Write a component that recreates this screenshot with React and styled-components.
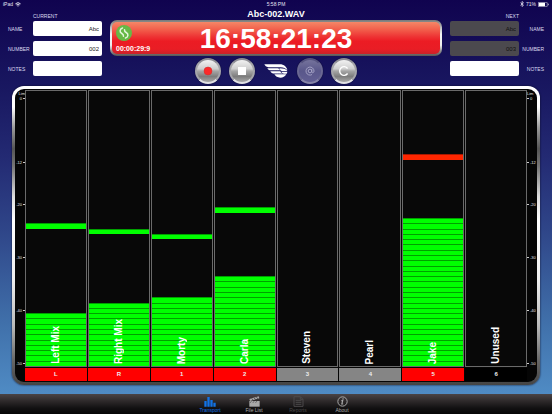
import React from "react";
import styled, { createGlobalStyle, css } from "styled-components";

const sans = '"Liberation Sans", Arial, Helvetica, sans-serif';

const GlobalStyle = createGlobalStyle`
  *, *::before, *::after { box-sizing: border-box; }
  body { margin: 0; background: #4f8bc4; }
  button, input { font-family: inherit; }
`;

const Page = styled.div`
  min-height: 100vh;
  display: flex;
  flex-direction: column;
  font-family: ${sans};
  color: #fff;
  background: linear-gradient(#10034f 0%, #191861 22%, #232a73 38%, #2f4689 56%, #4070aa 78%, #4f8bc4 95%);
`;

const StatusBar = styled.header`
  height: 8px;
  padding: 0 3px;
  display: grid;
  grid-template-columns: 1fr auto 1fr;
  align-items: center;
  font-size: 5px;
  line-height: 8px;
  color: #e4e2f0;
`;

const StatusGroup = styled.div`
  display: flex;
  align-items: center;
  gap: 2px;
  justify-content: ${(p) => (p.$end ? "flex-end" : "flex-start")};
  svg { display: block; }
`;

const Deck = styled.section`
  display: grid;
  grid-template-columns: 94px 1fr 94px;
  gap: 8px;
  padding: 0 8px;
  height: 78px;
`;

const TakeForm = styled.form`
  display: flex;
  flex-direction: column;
  gap: 5px;
`;

const TakeHeading = styled.h2`
  margin: 0 ${(p) => (p.$mirrored ? "25px" : "0")} -5px ${(p) => (p.$mirrored ? "0" : "25px")};
  height: 13px;
  padding-top: 5px;
  font-size: 5px;
  line-height: 6px;
  font-weight: 400;
  color: #dcdaf0;
  text-align: ${(p) => (p.$mirrored ? "right" : "left")};
`;

const FieldRow = styled.div`
  display: flex;
  flex-direction: ${(p) => (p.$mirrored ? "row-reverse" : "row")};
  align-items: center;
  height: 15px;
`;

const FieldLabel = styled.label`
  flex: 0 0 25px;
  font-size: 5px;
  line-height: 6px;
  color: #dcdaf0;
  text-align: ${(p) => (p.$mirrored ? "right" : "left")};
`;

const FieldInput = styled.input`
  flex: 1;
  min-width: 0;
  height: 15px;
  padding: 0 3px;
  border: 0;
  border-radius: 2px;
  background: #fff;
  color: #222;
  font-size: 6px;
  text-align: right;
  &:disabled { background: #4b494e; color: #111; opacity: 1; }
`;

const Center = styled.div`
  display: flex;
  flex-direction: column;
  align-items: stretch;
`;

const FileName = styled.h1`
  margin: 0;
  height: 12px;
  font-size: 9px;
  line-height: 12px;
  font-weight: 700;
  text-align: center;
`;

const DisplayFrame = styled.div`
  height: 36px;
  padding: 2px;
  border-radius: 7px;
  background: linear-gradient(#777 0%, #aaa 15%, #f4f4f4 40%, #eee 70%, #888 88%, #555 100%);
`;

const Display = styled.div`
  height: 100%;
  padding: 2px 4px 0;
  border-radius: 5px;
  display: grid;
  grid-template-columns: 1fr auto 1fr;
  align-items: center;
  background: linear-gradient(#f58767 0%, #f2624d 22%, #ee3535 45%, #ec1c24 60%, #e91d25 85%, #c9222a 100%);
`;

const Elapsed = styled.div`
  display: flex;
  flex-direction: column;
  align-items: flex-start;
  gap: 4px;
  font-size: 7px;
  line-height: 8px;
  font-weight: 700;
`;

const Timecode = styled.output`
  font-size: 28px;
  line-height: 30px;
  font-weight: 700;
`;

const Transport = styled.div`
  display: flex;
  justify-content: center;
  align-items: center;
  gap: 8px;
  padding-top: 2px;
`;

const RoundButton = styled.button`
  width: 26px;
  height: 26px;
  padding: 0;
  border: 2px solid #c9c9cd;
  border-color: #8d8d94 #a5a5aa #e2e2e4;
  border-radius: 50%;
  display: grid;
  place-items: center;
  background: linear-gradient(#f2f2f2 0%, #cfcfcf 40%, #a6a6a6 50%, #7d7d7d 75%, #a8a8a8 100%);
  box-shadow: 0 0 1px #000;
  &:disabled {
    border-color: #55537f #6a6892 #8785a8;
    background: linear-gradient(#75739c, #59578a 50%, #625f94);
  }
`;

const Emblem = styled.div`
  width: 26px;
  display: grid;
  place-items: center;
`;

const Bezel = styled.main`
  flex: 1;
  display: flex;
  margin: 0 12px 9px;
  padding: 3px;
  border-radius: 12px;
  background: linear-gradient(#fff 0%, #fff 7%, #999 14%, #555 21%, #777 27%, #ddd 37%, #fff 45%, #eee 65%, #bbb 80%, #666 92%, #444 100%);
  box-shadow: 0 0 2px #0a0a20;
`;

const Meters = styled.div`
  flex: 1;
  display: grid;
  grid-template-columns: 10px 1fr 10px;
  padding: 1px 0;
  border-radius: 9px;
  background: #050505;
`;

const Scale = styled.div`
  display: grid;
  grid-template-rows: repeat(52, minmax(0, 1fr));
  padding-top: 1px;
  margin-bottom: 15px;
  font-size: 4px;
  color: #e4e4e4;
`;

const ScaleMark = styled.div`
  grid-row: ${(p) => p.$row};
  display: flex;
  flex-direction: ${(p) => (p.$right ? "row-reverse" : "row")};
  align-items: center;
  justify-content: flex-end;
  gap: 1px;
  line-height: 5px;
  ${(p) =>
    p.$tick &&
    css`
      &::after {
        content: "";
        width: 2px;
        height: 1px;
        background: #ccc;
      }
    `}
`;

const Channels = styled.div`
  display: grid;
  grid-template-columns: repeat(8, minmax(0, 1fr));
  gap: 1px;
`;

const Channel = styled.section`
  display: flex;
  flex-direction: column;
  gap: 1px;
`;

const Well = styled.div`
  flex: 1;
  display: grid;
  grid-template: minmax(0, 1fr) / minmax(0, 1fr);
  border: 1px solid #6a6a6a;
  background: #080808;
`;

const Ladder = styled.div`
  grid-area: 1 / 1;
  display: grid;
  grid-template-rows: repeat(52, minmax(0, 1fr));
`;

const Segment = styled.div`
  ${(p) =>
    p.$color &&
    css`
      background: ${p.$color};
      box-shadow: inset 0 1px ${p.$color === "#ff2600" ? "#a81800" : "#00a000"};
    `}
`;

const ChannelName = styled.h3`
  grid-area: 1 / 1;
  place-self: end center;
  margin: 0 0 2px;
  writing-mode: vertical-rl;
  transform: rotate(180deg);
  font-size: 10px;
  line-height: 12px;
  font-weight: 700;
  white-space: nowrap;
`;

const fills = { armed: "#ff0000", idle: "#858585", off: "#000000" };

const ArmButton = styled.button`
  height: 13px;
  padding: 0;
  border: 0;
  background: ${(p) => fills[p.$state]};
  color: #eee;
  font-size: 6px;
  line-height: 13px;
  font-weight: 700;
`;

const TabBar = styled.nav`
  height: 20px;
  display: flex;
  justify-content: center;
  background: linear-gradient(#4a4446 0%, #2e2a2b 35%, #121112 70%, #050505 100%);
`;

const Tab = styled.button`
  width: 44px;
  padding: 2px 0 0;
  border: 0;
  background: none;
  color: ${(p) => (p.$active ? "#1273e6" : "#a8a8a8")};
  display: flex;
  flex-direction: column;
  align-items: center;
  font-size: 5px;
  line-height: 6px;
  svg { display: block; }
  &:disabled { color: #4b494a; }
`;

const WifiIcon = () => (
  <svg width="6" height="5" viewBox="0 0 12 9" fill="none" stroke="currentColor" strokeWidth="1.9">
    <path d="M.8 3.2a7.6 7.6 0 0 1 10.4 0M2.8 5.3a4.7 4.7 0 0 1 6.4 0" />
    <path d="M4.3 6.9 6 8.8l1.7-1.9a2.4 2.4 0 0 0-3.4 0Z" fill="currentColor" stroke="none" />
  </svg>
);

const BluetoothIcon = () => (
  <svg width="4" height="6" viewBox="0 0 8 12" fill="none" stroke="currentColor" strokeWidth="1.5">
    <path d="m1 3.3 6 5.2L4 11V1l3 2.5-6 5.2" />
  </svg>
);

const BatteryIcon = () => (
  <svg width="11" height="5" viewBox="0 0 22 10">
    <rect x=".5" y=".5" width="18" height="9" rx="1.5" fill="none" stroke="#fff" />
    <rect x="1.5" y="1.5" width="12.5" height="7" fill="#fff" />
    <path d="M20 3.2c1.6.4 1.6 3.2 0 3.6Z" fill="#fff" />
  </svg>
);

const SyncBadge = () => (
  <svg width="16" height="16" viewBox="0 0 32 32">
    <circle cx="16" cy="16" r="16" fill="#67b946" />
    <g fill="none" stroke="#e4f5dc" strokeLinecap="round">
      <path d="M13 6C7 8 7 14 11 16.500c3 1.800 4.500 3 4 6" strokeWidth="3" />
      <path d="M19 26c6-2 6-8 2-10.500-3-1.800-4.500-3-4-6" strokeWidth="3" />
    </g>
  </svg>
);

const RecordIcon = () => (
  <svg width="10" height="10" viewBox="0 0 20 20">
    <circle cx="10" cy="10" r="8" fill="#fb2a2a" stroke="#c83030" strokeWidth="1" />
  </svg>
);

const StopIcon = () => (
  <svg width="8" height="8" viewBox="0 0 8 8">
    <rect width="8" height="8" fill="#fff" />
  </svg>
);

const AtIcon = () => (
  <svg width="10" height="10" viewBox="0 0 20 20" fill="none" stroke="#a9a7c8" strokeWidth="1.800">
    <circle cx="10" cy="10" r="3.600" />
    <path d="M13.600 6.200v5c0 3.500 4.400 2.800 4.400-1.200a8 8 0 1 0-4 7.100" />
  </svg>
);

const CircleIcon = () => (
  <svg width="12" height="12" viewBox="0 0 24 24" fill="none" stroke="#fff" strokeWidth="2.800">
    <path d="M19.200 7a8.700 8.700 0 1 0 0 10" />
  </svg>
);

const WingIcon = () => (
  <svg width="24" height="14" viewBox="0 0 70 42" fill="#fff">
    <path d="M0 1h46c13 0 22 8 23 18-5-6-11-9-20-9H12C6 9 2 5 0 1Z" />
    <path d="M9 12.500h31c4 0 6 3 7 6.500H20C14 19 10 16 9 12.500Z" />
    <path d="M18 21.500h30c2 4 4 6 8 7H31c-7 0-11-3-13-7Z" />
    <path d="M30 31h36c-4 7-10 10-18 10s-15-4-18-10Z" />
    <path d="M45 12.500c12 0 21 2 24 8.500H53c-4 0-6-4-8-8.500Z" />
    <path d="M51 23h18c0 2-1 4-2 6h-8c-4 0-6-3-8-6Z" />
  </svg>
);

const BarsIcon = () => (
  <svg width="12" height="11" viewBox="0 0 36 33" fill="currentColor">
    <path d="M1 15h7v17H1zM10 3h7v29h-7zM19 12h7v20h-7zM28 20h7v12h-7z" />
  </svg>
);

const ClapperIcon = () => (
  <svg width="11" height="11" viewBox="0 0 33 33" fill="currentColor">
    <path d="M1 9 29 1l2 6L3 15z" />
    <path d="M1 15h31v17H1z" />
    <path d="m8 8 5 4M15 6l5 4M22 4l5 4M7 16l-3 4M15 16l-3 4M23 16l-3 4" stroke="#292728" strokeWidth="2" />
  </svg>
);

const ReportIcon = () => (
  <svg width="11" height="11" viewBox="0 0 33 33" fill="none" stroke="currentColor" strokeWidth="3">
    <path d="M3 2h19l8 8v21H3zM22 2v8h8M8 13h17M8 19h17M8 25h17" />
  </svg>
);

const InfoIcon = () => (
  <svg width="11" height="11" viewBox="0 0 33 33" fill="none" stroke="currentColor" strokeWidth="3">
    <circle cx="16.500" cy="16.500" r="14" />
    <path d="M13 14h4l-2.500 10h4" strokeWidth="3.500" />
    <circle cx="18" cy="9" r="2.400" fill="currentColor" stroke="none" />
  </svg>
);

const channels = [
  { id: "L", name: "Left Mix", level: 10, peak: 27, state: "armed" },
  { id: "R", name: "Right Mix", level: 12, peak: 26, state: "armed" },
  { id: "1", name: "Morty", level: 13, peak: 25, state: "armed" },
  { id: "2", name: "Carla", level: 17, peak: 30, state: "armed" },
  { id: "3", name: "Steven", level: 0, peak: 0, state: "idle" },
  { id: "4", name: "Pearl", level: 0, peak: 0, state: "idle" },
  { id: "5", name: "Jake", level: 28, peak: 40, state: "armed" },
  { id: "6", name: "Unused", level: 0, peak: 0, state: "off" },
];

const SEGMENTS = 52;
const HOT = 38;
const marks = [0, -12, -20, -30, -40, -50];

function segmentColor(step, level, peak) {
  if (step !== peak && step > level) return undefined;
  return step > HOT ? "#ff2600" : "#00ff00";
}

function Take({ id, title, values, mirrored, locked }) {
  return (
    <TakeForm aria-label={title}>
      <TakeHeading $mirrored={mirrored}>{title}</TakeHeading>
      {["NAME", "NUMBER", "NOTES"].map((label, i) => (
        <FieldRow key={label} $mirrored={mirrored}>
          <FieldLabel htmlFor={`${id}-${label}`} $mirrored={mirrored}>{label}</FieldLabel>
          <FieldInput id={`${id}-${label}`} defaultValue={values[i]} disabled={locked && i < 2} />
        </FieldRow>
      ))}
    </TakeForm>
  );
}

function DbScale({ right }) {
  return (
    <Scale>
      <ScaleMark $row={1} $right={right}>Lim</ScaleMark>
      {marks.map((db) => (
        <ScaleMark key={db} $row={2 - db} $right={right} $tick>{db}</ScaleMark>
      ))}
    </Scale>
  );
}

function ChannelMeter({ id, name, level, peak, state }) {
  return (
    <Channel>
      <Well>
        <Ladder>
          {Array.from({ length: SEGMENTS }, (_, i) => (
            <Segment key={i} $color={segmentColor(SEGMENTS - i, level, peak)} />
          ))}
        </Ladder>
        <ChannelName>{name}</ChannelName>
      </Well>
      <ArmButton type="button" $state={state}>{id}</ArmButton>
    </Channel>
  );
}

export default function App() {
  return (
    <Page>
      <GlobalStyle />
      <StatusBar>
        <StatusGroup>iPad <WifiIcon /></StatusGroup>
        <span>5:58 PM</span>
        <StatusGroup $end><BluetoothIcon /> 71% <BatteryIcon /></StatusGroup>
      </StatusBar>
      <Deck>
        <Take id="current" title="CURRENT" values={["Abc", "002", ""]} />
        <Center>
          <FileName>Abc-002.WAV</FileName>
          <DisplayFrame>
            <Display>
              <Elapsed><SyncBadge />00:00:29:9</Elapsed>
              <Timecode>16:58:21:23</Timecode>
            </Display>
          </DisplayFrame>
          <Transport>
            <RoundButton type="button" aria-label="Record"><RecordIcon /></RoundButton>
            <RoundButton type="button" aria-label="Stop"><StopIcon /></RoundButton>
            <Emblem><WingIcon /></Emblem>
            <RoundButton type="button" aria-label="At" disabled><AtIcon /></RoundButton>
            <RoundButton type="button" aria-label="Circle"><CircleIcon /></RoundButton>
          </Transport>
        </Center>
        <Take id="next" title="NEXT" values={["Abc", "003", ""]} mirrored locked />
      </Deck>
      <Bezel>
        <Meters>
          <DbScale />
          <Channels>
            {channels.map((channel) => <ChannelMeter key={channel.id} {...channel} />)}
          </Channels>
          <DbScale right />
        </Meters>
      </Bezel>
      <TabBar>
        <Tab type="button" $active><BarsIcon />Transport</Tab>
        <Tab type="button"><ClapperIcon />File List</Tab>
        <Tab type="button" disabled><ReportIcon />Reports</Tab>
        <Tab type="button"><InfoIcon />About</Tab>
      </TabBar>
    </Page>
  );
}
